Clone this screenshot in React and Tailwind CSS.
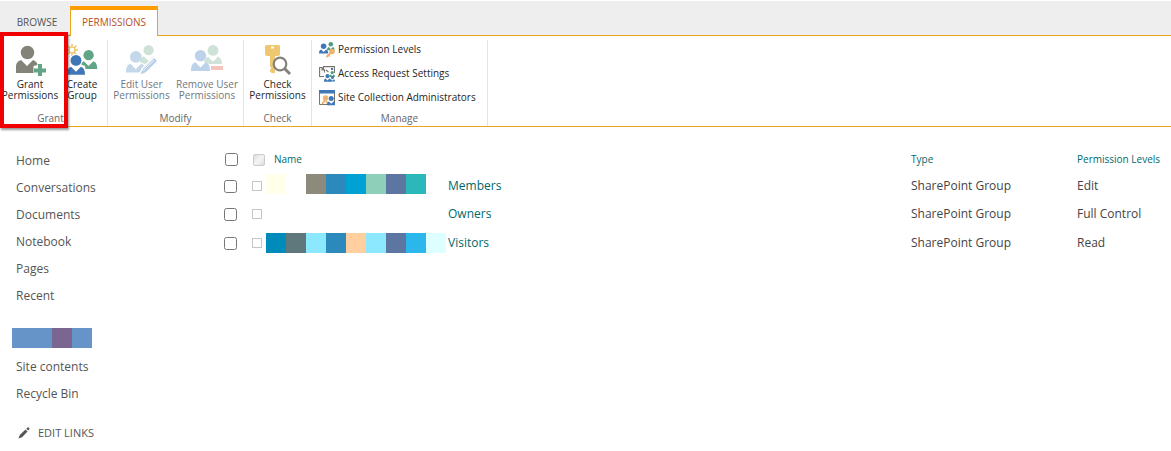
import React from 'react';

const navLinks = ['Home', 'Conversations', 'Documents', 'Notebook', 'Pages', 'Recent'];

const groups = [
    {
        name: 'Members',
        level: 'Edit',
        row: 'h-7',
        blocks: ['bg-[#ffffea]', 'bg-white', 'bg-[#8b8a7b]', 'bg-[#2c89bb]', 'bg-[#00a1d3]', 'bg-[#8dcfb9]', 'bg-[#5c75a1]', 'bg-[#2ab8ba]', 'bg-white'],
        pad: 'pb-1',
    },
    {
        name: 'Owners',
        level: 'Full Control',
        row: 'h-7',
        blocks: ['bg-white', 'bg-white', 'bg-white', 'bg-white', 'bg-white', 'bg-white', 'bg-white', 'bg-white', 'bg-white'],
        pad: 'pb-0',
    },
    {
        name: 'Visitors',
        level: 'Read',
        row: 'h-[30px]',
        blocks: ['bg-[#008cba]', 'bg-[#5f787b]', 'bg-[#8ce8ff]', 'bg-[#2c89bb]', 'bg-[#ffcfa0]', 'bg-[#8ce8ff]', 'bg-[#5c75a1]', 'bg-[#2cb7ec]', 'bg-[#deffff]'],
        pad: 'pb-0',
    },
];

// Head and shoulders with a collar notch, drawn in a 20x22 area
const Person = ({ x, y, scale = 1, fill }) => (
    <g transform={`translate(${x} ${y}) scale(${scale})`} fill={fill}>
        <circle cx="10" cy="6" r="6" />
        <path d="M4.500 13 L10 18.500 L15.500 13 C18.500 14 20 16.500 20 22 L0 22 C0 16.500 1.500 14 4.500 13 Z" />
    </g>
);

const GrantIcon = () => (
    <svg viewBox="0 0 32 32" className="size-8" aria-hidden="true">
        <circle cx="13.500" cy="8.500" r="6.800" fill="#84837a" />
        <path fill="#84837a" d="M7 16 L13 22 L19 16 C22 17 23.500 19 23.500 21 L19.500 22 L19.500 29 L2 29 V23 C2 19 4 17 7 16 Z" />
        <path fill="#62a586" d="M24 20 h4 v4.500 h4 v4 h-4 v4 h-4 v-4 h-4 v-4 h4 Z" />
    </svg>
);

const CreateGroupIcon = () => (
    <svg viewBox="0 0 32 32" className="size-8" aria-hidden="true">
        <g stroke="#eec160" strokeWidth="1.500">
            <path d="M6 0 V12 M0 6 H12 M1.700 1.700 L10.300 10.300 M10.300 1.700 L1.700 10.300" />
        </g>
        <circle cx="6" cy="6" r="3" fill="#fff" stroke="#eec160" strokeWidth="1.200" />
        <Person x={14} y={6} scale={0.86} fill="#62a586" />
        <circle cx="10.600" cy="16" r="6.300" fill="#fff" />
        <path fill="#fff" d="M2 22 L14 20 L19 22 L20.500 31 L1 31 Z" />
        <Person x={1} y={11} scale={0.9} fill="#3f78b7" />
    </svg>
);

const EditUserIcon = () => (
    <svg viewBox="0 0 32 32" className="size-8" aria-hidden="true">
        <Person x={14} y={1} scale={0.86} fill="#cfe2d8" />
        <path fill="#fff" d="M0 20 L12 18 L20 20 L20 30 L0 30 Z" />
        <Person x={0} y={7} scale={0.98} fill="#c5d7eb" />
        <path d="M13 32 L16 25 L28 13 L32 17 L20 29 Z" fill="#b9cfe7" stroke="#fff" strokeWidth="1.500" />
        <path d="M17 27 L28 16" stroke="#fff" strokeWidth="0.800" />
    </svg>
);

const RemoveUserIcon = () => (
    <svg viewBox="0 0 32 32" className="size-8" aria-hidden="true">
        <Person x={13} y={1} scale={0.9} fill="#cfe2d8" />
        <path fill="#fff" d="M0 21 L12 18 L19 20 L19 30 L0 30 Z" />
        <Person x={0} y={6} scale={0.95} fill="#bcd2ea" />
        <path fill="#fff" d="M19 20 H32 V28 H19 Z" />
        <path fill="#f3c5bd" d="M20 22 H32 V26 H20 Z" />
    </svg>
);

const CheckIcon = () => (
    <svg viewBox="0 0 32 32" className="size-8" aria-hidden="true">
        <path fill="#edc871" fillRule="evenodd" d="M4.500 1 H16.500 Q18 1 18 2.500 V10 Q18 12 16 12 H13 V29 H9.500 L8 27 V25 H9 V23 H8 V12 H5 Q3 12 3 10 V2.500 Q3 1 4.500 1 Z M9 2.500 V4.500 H12 V2.500 Z" />
        <circle cx="18" cy="20" r="6.300" fill="#fff" stroke="#84837a" strokeWidth="2.200" />
        <path d="M22.500 24.500 L28 30" stroke="#84837a" strokeWidth="3" />
    </svg>
);

const LevelsIcon = () => (
    <svg viewBox="0 0 16 16" className="size-4" aria-hidden="true">
        <Person x={8} y={0} scale={0.38} fill="#4f9c7b" />
        <Person x={0} y={1.500} scale={0.46} fill="#3f78b7" />
        <path d="M7.500 15 L13 9.500" stroke="#eeb271" strokeWidth="2.200" />
        <circle cx="13" cy="9.500" r="2.800" fill="#eeb271" />
        <path d="M9.500 13 L11 14.500" stroke="#eeb271" strokeWidth="1.300" />
    </svg>
);

const RequestIcon = () => (
    <svg viewBox="0 0 16 16" className="size-4" aria-hidden="true">
        <path d="M4.500 3 V0.600 H15.400 V7 M5 10.500 V10.500 H0.600 V1.500 H3 L5.500 4 V6.500 M3 1.500 V4 H5.500 M7 4 L9.500 6" fill="none" stroke="#77766e" strokeWidth="1.100" />
        <path fill="#3f78b7" d="M12 2 h2 v2 h-2 Z" />
        <Person x={10.500} y={5} scale={0.27} fill="#4f9c7b" />
        <Person x={5} y={8} scale={0.35} fill="#3f78b7" />
        <Person x={11} y={10} scale={0.25} fill="#3f78b7" />
    </svg>
);

const AdminIcon = () => (
    <svg viewBox="0 0 16 16" className="size-4" aria-hidden="true">
        <path d="M0.500 1 H15.500 V14.500 H0.500 Z" fill="#fff" stroke="#77766e" />
        <path fill="#3f78b7" d="M0 0 H16 V3.500 H0 Z" />
        <path d="M3 14 L7 9" stroke="#eeb271" strokeWidth="2" />
        <circle cx="6.500" cy="8" r="2.700" fill="#eeb271" />
        <path d="M7 11 L10 15" stroke="#eeb271" strokeWidth="2" />
        <Person x={8} y={6} scale={0.42} fill="#3f78b7" />
    </svg>
);

const manageLinks = [
    { label: 'Permission Levels', icon: LevelsIcon },
    { label: 'Access Request Settings', icon: RequestIcon },
    { label: 'Site Collection Administrators', icon: AdminIcon },
];

const RibbonButton = ({ icon: Icon, top, bottom, disabled, className }) => (
    <button
        type="button"
        disabled={disabled}
        className={`flex shrink-0 flex-col items-center text-center leading-[11px] whitespace-nowrap ${disabled ? 'text-[#6f7780]' : 'text-[#262626]'} ${className}`}
    >
        <Icon />
        <span className="mt-[3px]">{top}</span>
        <span>{bottom}</span>
    </button>
);

const RibbonGroup = ({ title, className, children }) => (
    <section className={`flex h-[86px] shrink-0 flex-col justify-between border-r border-[#e3e3e3] ${className}`}>
        {children}
        <h2 className="text-center leading-4 text-[#666]">{title}</h2>
    </section>
);

const NavLink = ({ children }) => (
    <li>
        <a href="#" className="block pl-4 leading-[27px]">{children}</a>
    </li>
);

const App = () => {
    return (
        <div className="min-h-screen bg-white pt-px font-['Open_Sans',sans-serif] text-xs text-[#444]">
            {/* Tabs */}
            <div className="flex h-[35px] items-end border-b border-[#eea31c] bg-[#eee] text-[10px] text-[#555]">
                <button type="button" className="h-6 w-[70px] pl-1">BROWSE</button>
                <button type="button" className="-mb-px h-[30px] w-[88px] border-x border-t-4 border-x-[#eea31c] border-t-[#ff9d00] bg-white text-[#b5501f]">
                    PERMISSIONS
                </button>
            </div>

            {/* Ribbon */}
            <div className="relative flex border-b border-[#eea31c] pt-1 text-[10px]">
                <RibbonGroup title="Grant" className="w-[108px] pr-1.5">
                    <div className="flex pt-1">
                        <RibbonButton icon={GrantIcon} top="Grant" bottom="Permissions" className="w-[60px]" />
                        <RibbonButton icon={CreateGroupIcon} top="Create" bottom="Group" className="w-11" />
                    </div>
                </RibbonGroup>
                <RibbonGroup title="Modify" className="w-[136px]">
                    <div className="flex pt-1">
                        <RibbonButton icon={EditUserIcon} top="Edit User" bottom="Permissions" disabled className="w-[67px]" />
                        <RibbonButton icon={RemoveUserIcon} top="Remove User" bottom="Permissions" disabled className="w-16" />
                    </div>
                </RibbonGroup>
                <RibbonGroup title="Check" className="w-[68px]">
                    <div className="flex justify-center pt-1">
                        <RibbonButton icon={CheckIcon} top="Check" bottom="Permissions" className="w-16" />
                    </div>
                </RibbonGroup>
                <RibbonGroup title="Manage" className="w-44">
                    <div className="flex flex-col items-start gap-1.5 pt-px pl-[7px] text-[#262626]">
                        {manageLinks.map(({ label, icon: Icon }) => (
                            <button key={label} type="button" className="flex h-[18px] items-center gap-[3px] whitespace-nowrap">
                                <Icon />
                                {label}
                            </button>
                        ))}
                    </div>
                </RibbonGroup>
                {/* Callout around Grant Permissions */}
                <div className="pointer-events-none absolute -top-1 left-0 h-24 w-[68px] border-4 border-[#f00000] shadow-[1px_2px_2px_rgba(0,0,0,0.4)]" />
            </div>

            <div className="flex">
                <nav className="w-56 shrink-0 pt-5 text-[#555]">
                    <ul>
                        {navLinks.map((label) => <NavLink key={label}>{label}</NavLink>)}
                    </ul>
                    <div className="mt-[19px] mb-[5px] ml-3 flex">
                        <span className="h-5 w-10 bg-[#6794c8]" />
                        <span className="h-5 w-5 bg-[#7b6591]" />
                        <span className="h-5 w-5 bg-[#6794c8]" />
                    </div>
                    <ul>
                        <NavLink>Site contents</NavLink>
                        <NavLink>Recycle Bin</NavLink>
                    </ul>
                    <button type="button" className="mt-[19px] flex items-center gap-2 pl-[18px] text-[11px]">
                        <svg viewBox="0 0 12 12" className="size-3" fill="#555" aria-hidden="true">
                            <path d="M0.500 11.500 L1.800 8 L7.500 2.500 L9.500 4.500 L4 10.200 Z M8.300 1.700 L9.500 0.600 Q10.300 0 11 0.800 Q12 1.700 11.200 2.500 L10.200 3.600 Z" />
                        </svg>
                        EDIT LINKS
                    </button>
                </nav>

                <main className="min-w-0 flex-1 pt-5">
                    <table className="w-full table-fixed border-collapse text-left">
                        <colgroup>
                            <col className="w-7" />
                            <col className="w-[14px]" />
                            <col />
                            <col className="w-[166px]" />
                            <col className="w-[94px]" />
                        </colgroup>
                        <thead className="text-[10px] text-[#00696b]">
                            <tr className="h-[25px]">
                                <th className="p-0 pl-px"><input type="checkbox" aria-label="Select all" className="m-0 block size-[13px]" /></th>
                                <th className="p-0">
                                    <input type="checkbox" aria-label="Toggle all items" className="m-0 ml-px block size-3 appearance-none rounded-xs border border-[#ccc] bg-linear-to-br from-[#ddd] via-[#f5f5f5] to-[#ddd]" />
                                </th>
                                <th className="p-0 pl-2 font-normal">Name</th>
                                <th className="p-0 font-normal">Type</th>
                                <th className="p-0 font-normal whitespace-nowrap">Permission Levels</th>
                            </tr>
                        </thead>
                        <tbody>
                            {groups.map(({ name, level, row, blocks, pad }) => (
                                <tr key={name} className={row}>
                                    <td className="p-0"><input type="checkbox" aria-label={`Select ${name}`} className="m-0 block size-[13px]" /></td>
                                    <td className="p-0">
                                        <input type="checkbox" aria-label={`Mark ${name}`} className="m-0 block size-[10px] appearance-none border border-[#c6c6c6]" />
                                    </td>
                                    <td className="p-0">
                                        <div className="flex items-center">
                                            <div className={`flex ${pad}`}>
                                                {blocks.map((color, i) => <span key={i} className={`h-5 w-5 ${color}`} />)}
                                            </div>
                                            <a href="#" className="ml-[2px] text-[#00696b]">{name}</a>
                                        </div>
                                    </td>
                                    <td className="p-0">SharePoint Group</td>
                                    <td className="p-0 whitespace-nowrap">{level}</td>
                                </tr>
                            ))}
                        </tbody>
                    </table>
                </main>
            </div>
        </div>
    );
};

export default App;
